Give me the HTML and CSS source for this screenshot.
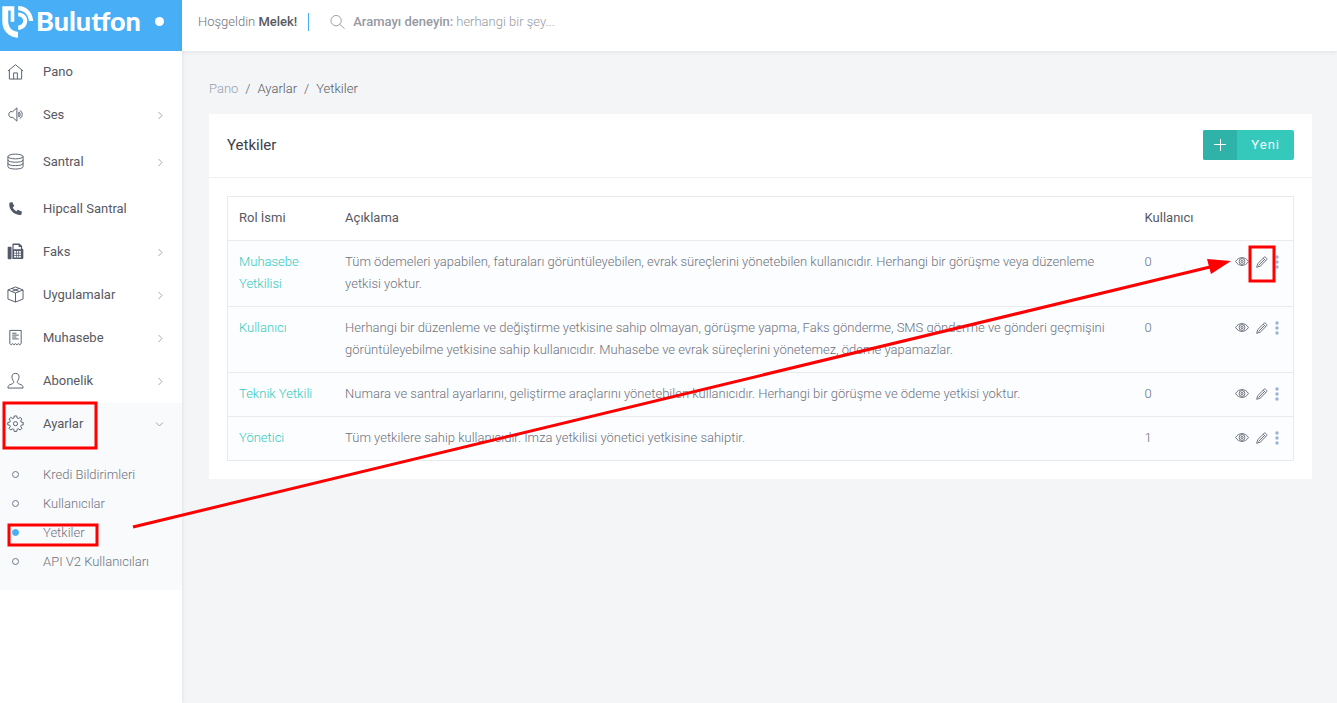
FILE: index.html
```html
<!DOCTYPE html>
<html lang="tr">
<head>
    <meta charset="UTF-8">
    <meta name="viewport" content="width=device-width, initial-scale=1.0">
    <title>Yetkiler - Bulutfon</title>
    <link rel="stylesheet" href="styles.css">
</head>
<body>
    <!-- Shared icons -->
    <svg class="sprite" aria-hidden="true">
        <symbol id="i-right" viewBox="0 0 8 10"><path d="M2.500 2l3.500 3.500L2.500 9"/></symbol>
        <symbol id="i-eye" viewBox="0 0 14 12"><path d="M.6 5.500C3.500.3 10.500.3 13.400 5.500 10.500 10.700 3.500 10.700.6 5.500z"/><circle cx="7" cy="5.500" r="2.900"/><circle cx="7" cy="5.500" r="1.100"/></symbol>
        <symbol id="i-pencil" viewBox="0 0 12 12"><path d="M.7 11.300l1-3.600L8.300 1.100c.8-.7 3.200 1.500 2.500 2.500L4.200 10.200zM7.200 2.200l2.500 2.500M2.500 9.500l5.500-5.500"/></symbol>
        <symbol id="i-dots" viewBox="0 0 4 14"><circle cx="2" cy="2" r="1.700"/><circle cx="2" cy="7" r="1.700"/><circle cx="2" cy="12" r="1.700"/></symbol>
    </svg>

    <aside class="sidebar">
        <div class="brand">
            <a class="logo" href="#">
                <svg class="logo-mark" viewBox="0 0 32 34" aria-hidden="true">
                    <path d="M.3 1.200h12v15.500H8.700V5.400H6.200v10.500c0 6.500 4 10.300 9.800 10.800v6C6.500 32 .3 26 .3 16z"/>
                    <path d="M16.200 1c8 .2 14 5.200 15 15h-4.300C26.500 9.500 22 5.500 16.200 5.200z"/>
                    <path d="M16.200 7.500c5.800.4 9 3.600 9 8.200 0 5.200-3.400 8.800-9 9.300v-4.400c3.200-.5 5-2.200 5-4.900 0-2.500-1.800-4.100-5-4.500z"/>
                </svg>
                <span>Bulutfon</span>
            </a>
            <button class="toggle" type="button" aria-label="Menü"></button>
        </div>

        <nav class="menu">
            <a class="menu-item" href="#">
                <svg class="icon" viewBox="0 0 18 18"><path d="M1 8.500l8-6.700 8 6.700M2.500 7.500V17h13V7.500M7 17v-6.500h4V17"/></svg>
                <span>Pano</span>
            </a>
            <a class="menu-item" href="#">
                <svg class="icon" viewBox="0 0 18 18"><path d="M10.500 2v14L6 12H3.500L2 10V8l1.500-2H6zM12.500 6.500v5c2 0 2-5 0-5M13.500 5c3.500.5 3.500 7.500 0 8"/></svg>
                <span>Ses</span>
                <svg class="arrow"><use href="#i-right"/></svg>
            </a>
            <a class="menu-item tall" href="#">
                <svg class="icon" viewBox="0 0 18 18"><ellipse cx="9" cy="3.700" rx="8" ry="2.500"/><path d="M1 3.700v10.800c0 3.300 16 3.300 16 0V3.700M1 7.300c0 3.300 16 3.300 16 0M1 10.900c0 3.300 16 3.300 16 0"/></svg>
                <span>Santral</span>
                <svg class="arrow"><use href="#i-right"/></svg>
            </a>
            <a class="menu-item" href="#">
                <svg class="icon solid" viewBox="0 0 18 18"><path d="M2.600 2.900l2.900-.9 2.200 4.400-1.600 1.600c.8 1.700 2.100 3 3.800 3.800l1.600-1.600 4.400 2.200-.8 3.100C8.500 17.200 1 10 2.600 2.900z"/></svg>
                <span>Hipcall Santral</span>
            </a>
            <a class="menu-item" href="#">
                <svg class="icon solid" viewBox="0 0 18 18"><path fill-rule="evenodd" d="M1.500 4H4c.5 0 .8.3.8.8v11.500c0 .5-.3.8-.8.8H1.500c-.5 0-.8-.3-.8-.8V4.800c0-.5.3-.8.8-.8zM5.700 7V1.500c0-.6.4-1 1-1h6.500L16 3.200V6c.8 0 1.300.5 1.300 1.200v8.500c0 .8-.5 1.300-1.300 1.300H5.700zM7 2v4.500h7.700V4.200h-2.400V2zM7.500 8.500v6.800h7.200V8.500z"/><path d="M7.500 10.300h7.200v.8H7.500zM7.500 12.700h7.200v.8H7.500zM9.500 8.500h.8v6.800h-.8zM12 8.500h.8v6.800H12z"/></svg>
                <span>Faks</span>
                <svg class="arrow"><use href="#i-right"/></svg>
            </a>
            <a class="menu-item" href="#">
                <svg class="icon" viewBox="0 0 18 18"><path d="M1 4.200L9 1l8 3.200v9.600L9 17l-8-3.200zM1 4.200l8 3.200 8-3.200M9 7.400V17M5 2.600l8 3.200M5 5.800l8-3.200"/></svg>
                <span>Uygulamalar</span>
                <svg class="arrow"><use href="#i-right"/></svg>
            </a>
            <a class="menu-item" href="#">
                <svg class="icon" viewBox="0 0 18 18"><path d="M3 15.500V1.500h12v14l-1.500 1.200-1.500-1.200-1.500 1.200L9 15.500l-1.500 1.200L6 15.500l-1.500 1.200zM5.500 4.500H10M5.500 6.500h7M5.500 8.500H10M5.500 10.500h7"/></svg>
                <span>Muhasebe</span>
                <svg class="arrow"><use href="#i-right"/></svg>
            </a>
            <a class="menu-item" href="#">
                <svg class="icon" viewBox="0 0 18 18"><path d="M9 1.500c-3 0-4 1.800-3.700 4.300C5.500 8 6.500 9 7 10c.4 1.500-.5 2.200-2.500 2.900C2 13.600 1 14.500 1 17h16c0-2.500-1-3.400-3.500-4.100C11.500 12.200 10.600 11.500 11 10c.5-1 1.500-2 1.700-4.200C13 3.300 12 1.500 9 1.500z"/></svg>
                <span>Abonelik</span>
                <svg class="arrow"><use href="#i-right"/></svg>
            </a>

            <div class="menu-open">
                <a class="menu-item" href="#">
                    <svg class="icon" viewBox="0 0 18 18"><path d="M7.700 1h2.600l.5 2.300 1.200.5 2-1.300L15.800 4.300l-1.300 2 .5 1.200 2.200.5v2.400l-2.200.5-.5 1.200 1.300 2-1.800 1.800-2-1.300-1.200.5-.5 2.300H7.700l-.5-2.300-1.200-.5-2 1.300-1.800-1.800 1.300-2-.5-1.200-2.200-.5V8L3 7.500l.5-1.200-1.300-2L4 2.500l2 1.300 1.200-.5z"/><circle cx="9" cy="9.200" r="2.200"/></svg>
                    <span>Ayarlar</span>
                    <svg class="arrow down"><use href="#i-right"/></svg>
                </a>
                <div class="submenu">
                    <a href="#">Kredi Bildirimleri</a>
                    <a href="#">Kullanıcılar</a>
                    <a class="active" href="#">Yetkiler</a>
                    <a href="#">API V2 Kullanıcıları</a>
                </div>
            </div>
        </nav>
    </aside>

    <div class="page">
        <header class="topbar">
            <div class="welcome">Hoşgeldin <strong>Melek!</strong></div>
            <form class="search">
                <svg viewBox="0 0 16 16" aria-hidden="true"><circle cx="6.500" cy="6" r="5.500"/><path d="M10.500 10L15.500 14.500"/></svg>
                <label for="search">Aramayı deneyin:</label>
                <input id="search" type="text" placeholder="herhangi bir şey...">
            </form>
        </header>

        <main class="content">
            <nav class="breadcrumb">
                <a class="home" href="#">Pano</a>
                <span>/</span>
                <a href="#">Ayarlar</a>
                <span>/</span>
                <a href="#">Yetkiler</a>
            </nav>

            <section class="card">
                <div class="card-head">
                    <h1>Yetkiler</h1>
                    <button class="btn-new" type="button">
                        <span class="plus"><svg viewBox="0 0 12 12" aria-hidden="true"><path d="M6.500 0v12M0 5.500h12"/></svg></span>
                        <span class="label">Yeni</span>
                    </button>
                </div>
                <div class="card-body">
                    <table class="roles">
                        <thead>
                            <tr>
                                <th class="col-role">Rol İsmi</th>
                                <th class="col-text">Açıklama</th>
                                <th>Kullanıcı</th>
                                <th></th>
                            </tr>
                        </thead>
                        <tbody>
                            <tr>
                                <td><a href="#">Muhasebe Yetkilisi</a></td>
                                <td>Tüm ödemeleri yapabilen, faturaları görüntüleyebilen, evrak süreçlerini yönetebilen kullanıcıdır. Herhangi bir görüşme veya düzenleme yetkisi yoktur.</td>
                                <td>0</td>
                                <td>
                                    <div class="actions">
                                        <button type="button" aria-label="Görüntüle"><svg class="eye"><use href="#i-eye"/></svg></button>
                                        <button type="button" aria-label="Düzenle"><svg class="pencil"><use href="#i-pencil"/></svg></button>
                                        <button type="button" aria-label="Diğer"><svg class="dots"><use href="#i-dots"/></svg></button>
                                    </div>
                                </td>
                            </tr>
                            <tr>
                                <td><a href="#">Kullanıcı</a></td>
                                <td>Herhangi bir düzenleme ve değiştirme yetkisine sahip olmayan, görüşme yapma, Faks gönderme, SMS gönderme ve gönderi geçmişini görüntüleyebilme yetkisine sahip kullanıcıdır. Muhasebe ve evrak süreçlerini yönetemez, ödeme yapamazlar.</td>
                                <td>0</td>
                                <td>
                                    <div class="actions">
                                        <button type="button" aria-label="Görüntüle"><svg class="eye"><use href="#i-eye"/></svg></button>
                                        <button type="button" aria-label="Düzenle"><svg class="pencil"><use href="#i-pencil"/></svg></button>
                                        <button type="button" aria-label="Diğer"><svg class="dots"><use href="#i-dots"/></svg></button>
                                    </div>
                                </td>
                            </tr>
                            <tr>
                                <td><a href="#">Teknik Yetkili</a></td>
                                <td>Numara ve santral ayarlarını, geliştirme araçlarını yönetebilen kullanıcıdır. Herhangi bir görüşme ve ödeme yetkisi yoktur.</td>
                                <td>0</td>
                                <td>
                                    <div class="actions">
                                        <button type="button" aria-label="Görüntüle"><svg class="eye"><use href="#i-eye"/></svg></button>
                                        <button type="button" aria-label="Düzenle"><svg class="pencil"><use href="#i-pencil"/></svg></button>
                                        <button type="button" aria-label="Diğer"><svg class="dots"><use href="#i-dots"/></svg></button>
                                    </div>
                                </td>
                            </tr>
                            <tr>
                                <td><a href="#">Yönetici</a></td>
                                <td>Tüm yetkilere sahip kullanıcıdır. İmza yetkilisi yönetici yetkisine sahiptir.</td>
                                <td>1</td>
                                <td>
                                    <div class="actions">
                                        <button type="button" aria-label="Görüntüle"><svg class="eye"><use href="#i-eye"/></svg></button>
                                        <button type="button" aria-label="Düzenle"><svg class="pencil"><use href="#i-pencil"/></svg></button>
                                        <button type="button" aria-label="Diğer"><svg class="dots"><use href="#i-dots"/></svg></button>
                                    </div>
                                </td>
                            </tr>
                        </tbody>
                    </table>
                </div>
            </section>
        </main>
    </div>

    <!-- Red marks that walk the user to the edit button -->
    <svg class="marks" aria-hidden="true">
        <rect x="4" y="403" width="92" height="45"/>
        <rect x="9" y="525" width="88" height="20"/>
        <rect x="1250" y="247" width="24" height="34"/>
        <path d="M133 527L1210 267"/>
        <path class="head" d="M1231 261L1207 259L1211 274Z"/>
    </svg>
</body>
</html>
```
FILE: styles.css
```css
*,
*::before {
    box-sizing: border-box;
}

body {
    margin: 0;
    min-height: 100vh;
    display: flex;
    position: relative;
    background: #f3f5f7;
    color: #6f727d;
    font-family: Roboto, "Open Sans", sans-serif;
    font-size: 13px;
    font-weight: 300;
    line-height: 22px;
}

a {
    color: inherit;
    text-decoration: none;
}

button {
    padding: 0;
    border: 0;
    background: none;
    font: inherit;
    cursor: pointer;
}

svg {
    fill: none;
    stroke: currentColor;
}

.sprite {
    position: absolute;
    width: 0;
    height: 0;
}

/* Sidebar */
.sidebar {
    width: 182px;
    flex: none;
    background: #fff;
    box-shadow: 0 0 4px rgba(69, 65, 78, 0.15);
}

.brand {
    height: 51px;
    display: flex;
    justify-content: space-between;
    background: #48aff7;
    padding: 5px 18px 0 2px;
}

.logo {
    display: flex;
    gap: 2px;
    height: 34px;
    color: #fff;
    font-family: Lato, sans-serif;
    font-size: 27px;
    font-weight: 900;
    line-height: 32px;
}

.logo-mark {
    width: 32px;
    height: 34px;
    fill: #fff;
    stroke: none;
}

.toggle {
    width: 9px;
    height: 9px;
    margin-top: 12px;
    border-radius: 50%;
    background: #fff;
}

.menu-item {
    height: 43px;
    display: flex;
    align-items: center;
    padding: 0 18px 2px 7px;
    color: #575962;
    font-weight: 400;
}

.menu-item.tall {
    height: 51px;
}

.icon {
    width: 17px;
    height: 17px;
    margin-right: 19px;
    color: #525a69;
}

.icon.solid {
    fill: currentColor;
    stroke: none;
}

.arrow {
    width: 8px;
    height: 10px;
    margin-left: auto;
    color: #a3a7b0;
}

.arrow.down {
    transform: rotate(90deg);
}

.menu-open {
    background: #f8fafc;
}

.submenu {
    padding: 14px 0;
}

.submenu a {
    height: 29px;
    display: flex;
    align-items: center;
    gap: 24px;
    padding-left: 12px;
}

.submenu a::before {
    content: "";
    width: 7px;
    height: 7px;
    border: 1px solid #6f7a8c;
    border-radius: 50%;
}

.submenu a.active::before {
    border-color: #48aff7;
    background: #48aff7;
}

/* Header */
.page {
    flex: 1;
    min-width: 0;
}

.topbar {
    height: 51px;
    display: flex;
    align-items: flex-start;
    gap: 21px;
    padding: 13px 16px 0;
    background: #fff;
    box-shadow: 0 1px 4px rgba(69, 65, 78, 0.1);
}

.welcome {
    height: 18px;
    line-height: 18px;
    padding-right: 11px;
    border-right: 1px solid #48aff7;
}

.welcome strong {
    font-weight: 500;
    color: #575962;
}

.search {
    display: flex;
    align-items: center;
    height: 18px;
    color: #9699a2;
}

.search svg {
    width: 15px;
    height: 15px;
    margin-right: 8px;
}

.search label {
    font-weight: 500;
    margin-right: 3px;
}

.search input {
    width: 240px;
    padding: 0;
    border: 0;
    outline: 0;
    background: none;
    font: inherit;
    color: inherit;
}

.search input::placeholder {
    color: #9699a2;
    opacity: 1;
}

/* Content */
.content {
    padding: 27px 25px 26px 27px;
}

.breadcrumb {
    display: flex;
    gap: 7px;
    margin-bottom: 14px;
    color: #575962;
}

.breadcrumb .home {
    color: #9aa0b0;
}

.card {
    background: #fff;
}

.card-head {
    display: flex;
    justify-content: space-between;
    align-items: center;
    height: 64px;
    padding: 0 18px 2px;
    border-bottom: 1px solid #f0f1f4;
}

.card-head h1 {
    margin: 0;
    color: #3f4047;
    font-size: 15px;
    font-weight: 400;
}

.btn-new {
    display: flex;
    height: 30px;
    border-radius: 2px;
    overflow: hidden;
    background: #34c9bb;
    color: #fff;
    font-weight: 400;
    line-height: 30px;
    letter-spacing: 1px;
}

.btn-new .plus {
    width: 34px;
    display: grid;
    place-items: center;
    background: #2fb3a8;
}

.btn-new .plus svg {
    width: 12px;
    height: 12px;
}

.btn-new .label {
    padding: 0 14px;
}

.card-body {
    padding: 18px;
}

.roles {
    width: 100%;
    border: 1px solid #e8eaed;
    border-collapse: collapse;
}

.roles th,
.roles td {
    padding: 10px 11px 11px;
    border-bottom: 1px solid #e8eaed;
    text-align: left;
    vertical-align: top;
}

.roles th {
    font-weight: 400;
    color: #575962;
}

.roles .col-role {
    width: 10%;
}

.roles .col-text {
    width: 75%;
}

.roles td {
    background: #fbfdff;
}

.roles td a {
    color: #34c9bb;
}

.actions {
    display: flex;
    justify-content: flex-end;
    align-items: center;
    gap: 7px;
    height: 22px;
    padding-right: 3px;
    color: #6f727d;
}

.actions button {
    display: flex;
    color: inherit;
}

.eye {
    width: 14px;
    height: 12px;
}

.pencil {
    width: 12px;
    height: 12px;
}

.dots {
    width: 4px;
    height: 14px;
    fill: #9bb2d1;
    stroke: none;
}

/* Guide marks */
.marks {
    position: absolute;
    top: 0;
    left: 0;
    width: 100%;
    height: 100%;
    pointer-events: none;
    stroke: #f00;
    stroke-width: 3px;
}

.marks .head {
    fill: #f00;
    stroke: none;
}
```
